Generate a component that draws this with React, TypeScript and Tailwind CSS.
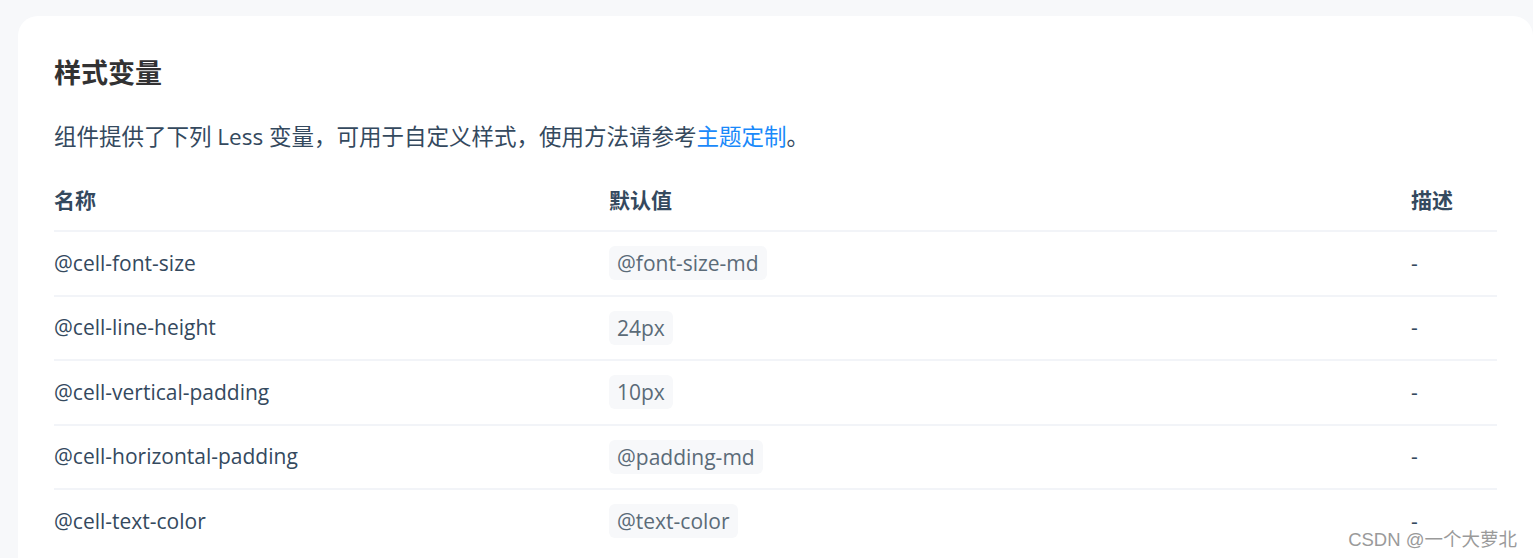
const rows = [
  { name: "@cell-font-size", value: "@font-size-md" },
  { name: "@cell-line-height", value: "24px" },
  { name: "@cell-vertical-padding", value: "10px" },
  { name: "@cell-horizontal-padding", value: "@padding-md" },
  { name: "@cell-text-color", value: "@text-color" },
];

export default function App() {
  return (
    <div className="relative h-[558px] w-[1533px] overflow-hidden bg-[#f7f8fa] pl-[18px] pt-[16px] font-['Open_Sans','Noto_Sans_CJK_SC',sans-serif]">
      <div className="w-[1515px] h-[700px] rounded-[20px] bg-white px-[36px] pt-[37px]">
        <h3 className="text-[27px] leading-[40px] font-bold text-[#323233]">样式变量</h3>
        <p className="mt-[26px] text-[22.5px] leading-[36px] text-[#34495e]">
          组件提供了下列 Less 变量，可用于自定义样式，使用方法请参考
          <span className="text-[#1989fa]">主题定制</span>。
        </p>

        <div className="mt-[17px] w-[1443px] text-[21px] text-[#34495e]">
          <div className="grid h-[58px] grid-cols-[555px_802px_1fr] items-center font-bold">
            <div>名称</div>
            <div>默认值</div>
            <div>描述</div>
          </div>
          {rows.map((r) => (
            <div
              key={r.name}
              className="grid h-[64.5px] grid-cols-[555px_802px_1fr] items-center border-t-2 border-[#f2f4f8]"
            >
              <div>{r.name}</div>
              <div>
                <span className="inline-block rounded-[6px] bg-[#f7f8fa] px-[8px] leading-[34px] text-[21px] text-[#5b6b78]">
                  {r.value}
                </span>
              </div>
              <div>-</div>
            </div>
          ))}
        </div>
      </div>

      <div className="absolute right-[16px] bottom-[7px] text-[18.5px] leading-[22px] text-[#9a9a9a] font-['Liberation_Sans','Noto_Sans_CJK_SC',sans-serif] [text-shadow:0_0_2px_#fff]">
        CSDN @一个大萝北
      </div>
    </div>
  );
}
